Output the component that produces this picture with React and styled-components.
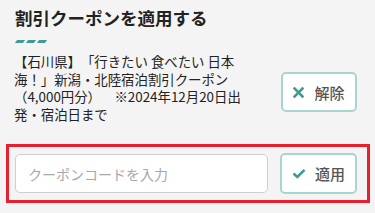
import React from "react";
import styled, { createGlobalStyle } from "styled-components";

const GlobalStyle = createGlobalStyle`
  html, body {
    margin: 0;
    padding: 0;
    background: #f4f4f4;
    font-family: "Noto Sans CJK JP", "Noto Sans", sans-serif;
    color: #222;
  }
`;

const Page = styled.div`
  width: 375px;
  height: 213px;
  overflow: hidden;
  background: #f4f4f4;
  text-spacing-trim: space-all;
`;

const Header = styled.div`
  padding: 6px 14px 0 15px;
`;

const Title = styled.h2`
  margin: 0;
  font-size: 17.5px;
  line-height: 24px;
  font-weight: 700;
  color: #222;
`;

const Dashes = styled.div`
  display: flex;
  gap: 3px;
  margin-top: 10px;
  padding-left: 1px;
`;

const Dash = styled.span`
  display: block;
  width: 8px;
  height: 3px;
  background: #3f9c92;
  transform: skewX(-35deg);
`;

const InfoRow = styled.div`
  display: flex;
  align-items: flex-start;
  justify-content: space-between;
  margin-top: 10px;
  padding: 0 18px 0 14px;
`;

const CouponText = styled.p`
  margin: 0;
  width: 232px;
  font-size: 13.4px;
  line-height: 17.5px;
  color: #222;
  text-spacing-trim: space-all;
`;

const OutlineButton = styled.button`
  display: flex;
  align-items: center;
  justify-content: center;
  gap: ${(p) => p.$gap || 10}px;
  width: ${(p) => p.$width}px;
  height: ${(p) => p.$height}px;
  margin-top: ${(p) => p.$top || 0}px;
  padding: 0;
  flex-shrink: 0;
  background: #fff;
  border: 2px solid #a9d5d0;
  border-radius: 5px;
  font-family: "Noto Sans CJK JP", sans-serif;
  font-size: 15px;
  font-weight: 500;
  color: #555;
  cursor: pointer;
`;

const ApplyBox = styled.div`
  display: flex;
  align-items: center;
  gap: 12px;
  margin: 21px 5px 0 6px;
  padding: 6px 10px 6px 6px;
  border: 3px solid #e8202e;
`;

const CodeInput = styled.input`
  flex: 1;
  min-width: 0;
  height: 39px;
  box-sizing: border-box;
  padding: 0 12px;
  background: #fff;
  border: 1px solid #cfcfcf;
  border-radius: 5px;
  font-family: "Noto Sans CJK JP", sans-serif;
  font-size: 14px;
  color: #222;
  outline: none;

  &::placeholder {
    color: #a8a8a8;
  }
`;

const CloseIcon = () => (
  <svg width="11" height="11" viewBox="0 0 11 11">
    <path d="M1.5 1.5 L9.5 9.5 M9.5 1.5 L1.5 9.5" stroke="#3f9c92" strokeWidth="2.6" strokeLinecap="square" />
  </svg>
);

const CheckIcon = () => (
  <svg width="14" height="11" viewBox="0 0 14 11">
    <path d="M1.5 5.5 L5.3 9 L12.5 1.8" fill="none" stroke="#3f9c92" strokeWidth="2.6" />
  </svg>
);

export default function App() {
  return (
    <Page>
      <GlobalStyle />
      <Header>
        <Title>割引クーポンを適用する</Title>
        <Dashes>
          <Dash />
          <Dash />
          <Dash />
        </Dashes>
      </Header>
      <InfoRow>
        <CouponText>
          【石川県】「行きたい 食べたい 日本海！」新潟・北陸宿泊割引クーポン（4,000円分）　※2024年12月20日出発・宿泊日まで
        </CouponText>
        <OutlineButton $width={76} $height={40} $top={19}>
          <CloseIcon />
          解除
        </OutlineButton>
      </InfoRow>
      <ApplyBox>
        <CodeInput placeholder="クーポンコードを入力" />
        <OutlineButton $width={77} $height={41} $gap={9}>
          <CheckIcon />
          適用
        </OutlineButton>
      </ApplyBox>
    </Page>
  );
}
